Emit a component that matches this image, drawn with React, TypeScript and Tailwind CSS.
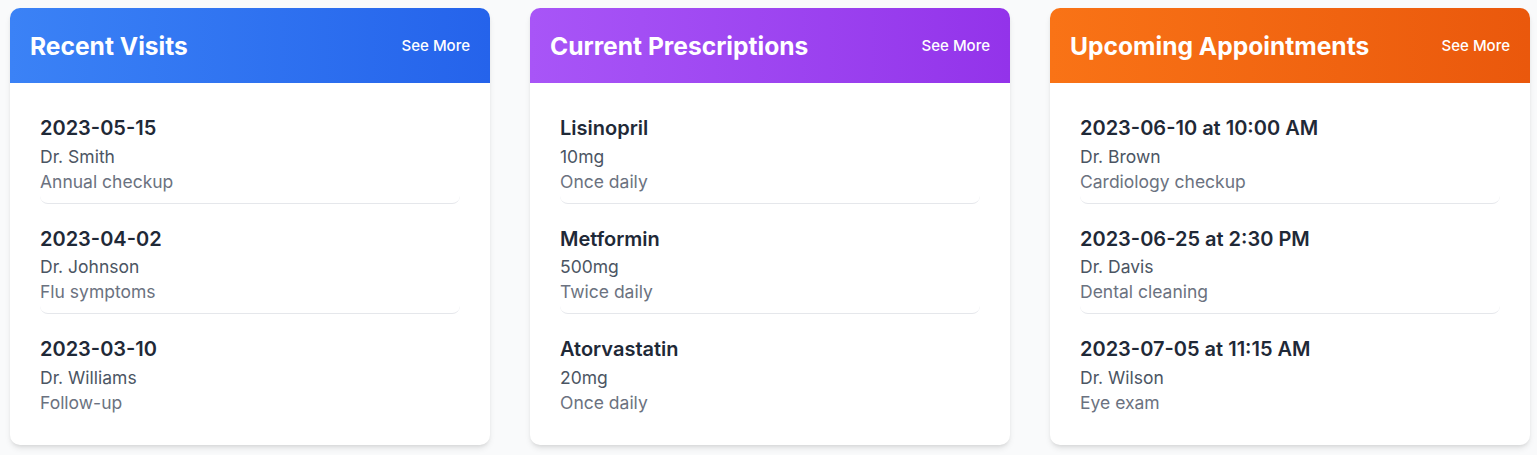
import React from "react";

type Item = { title: string; sub: string; desc: string };
type Card = { title: string; grad: string; items: Item[] };

const cards: Card[] = [
  {
    title: "Recent Visits",
    grad: "bg-gradient-to-r from-[#3b82f6] to-[#2563eb]",
    items: [
      { title: "2023-05-15", sub: "Dr. Smith", desc: "Annual checkup" },
      { title: "2023-04-02", sub: "Dr. Johnson", desc: "Flu symptoms" },
      { title: "2023-03-10", sub: "Dr. Williams", desc: "Follow-up" },
    ],
  },
  {
    title: "Current Prescriptions",
    grad: "bg-gradient-to-r from-[#a855f7] to-[#9333ea]",
    items: [
      { title: "Lisinopril", sub: "10mg", desc: "Once daily" },
      { title: "Metformin", sub: "500mg", desc: "Twice daily" },
      { title: "Atorvastatin", sub: "20mg", desc: "Once daily" },
    ],
  },
  {
    title: "Upcoming Appointments",
    grad: "bg-gradient-to-r from-[#f97316] to-[#ea580c]",
    items: [
      { title: "2023-06-10 at 10:00 AM", sub: "Dr. Brown", desc: "Cardiology checkup" },
      { title: "2023-06-25 at 2:30 PM", sub: "Dr. Davis", desc: "Dental cleaning" },
      { title: "2023-07-05 at 11:15 AM", sub: "Dr. Wilson", desc: "Eye exam" },
    ],
  },
];

export default function App() {
  return (
    <div
      className="min-h-[455px] bg-[#f9fafb] pl-[10px] pt-2"
      style={{ fontFamily: "Inter, 'Noto Sans', sans-serif" }}
    >
      <div className="flex gap-10">
        {cards.map((c) => (
          <div
            key={c.title}
            className="w-[480px] shrink-0 overflow-hidden rounded-[10px] bg-white shadow-[0_4px_6px_-1px_rgba(0,0,0,0.1),0_2px_4px_-2px_rgba(0,0,0,0.1)]"
          >
            <div className={`${c.grad} flex h-[75px] items-center justify-between px-5 pt-[1px]`}>
              <h2 className="text-[24.6px] font-bold text-white">{c.title}</h2>
              <span className="text-[15px] font-medium text-white">See More</span>
            </div>
            <div className="flex flex-col gap-[11px] px-[30px] pb-[20px] pt-[21px]">
              {c.items.map((it, i) => (
                <div
                  key={it.title}
                  className={`rounded-lg pt-2.5 ${i < c.items.length - 1 ? "border-b border-[#e5e7eb] pb-[9px]" : "pb-2.5"}`}
                >
                  <div className="text-xl font-semibold leading-7 text-[#1f2937]">{it.title}</div>
                  <div className="mt-[1.5px] text-[17.5px] leading-[25px] text-[#4b5563]">{it.sub}</div>
                  <div className="text-[17.5px] leading-[25px] text-[#6b7280]">{it.desc}</div>
                </div>
              ))}
            </div>
          </div>
        ))}
      </div>
    </div>
  );
}
